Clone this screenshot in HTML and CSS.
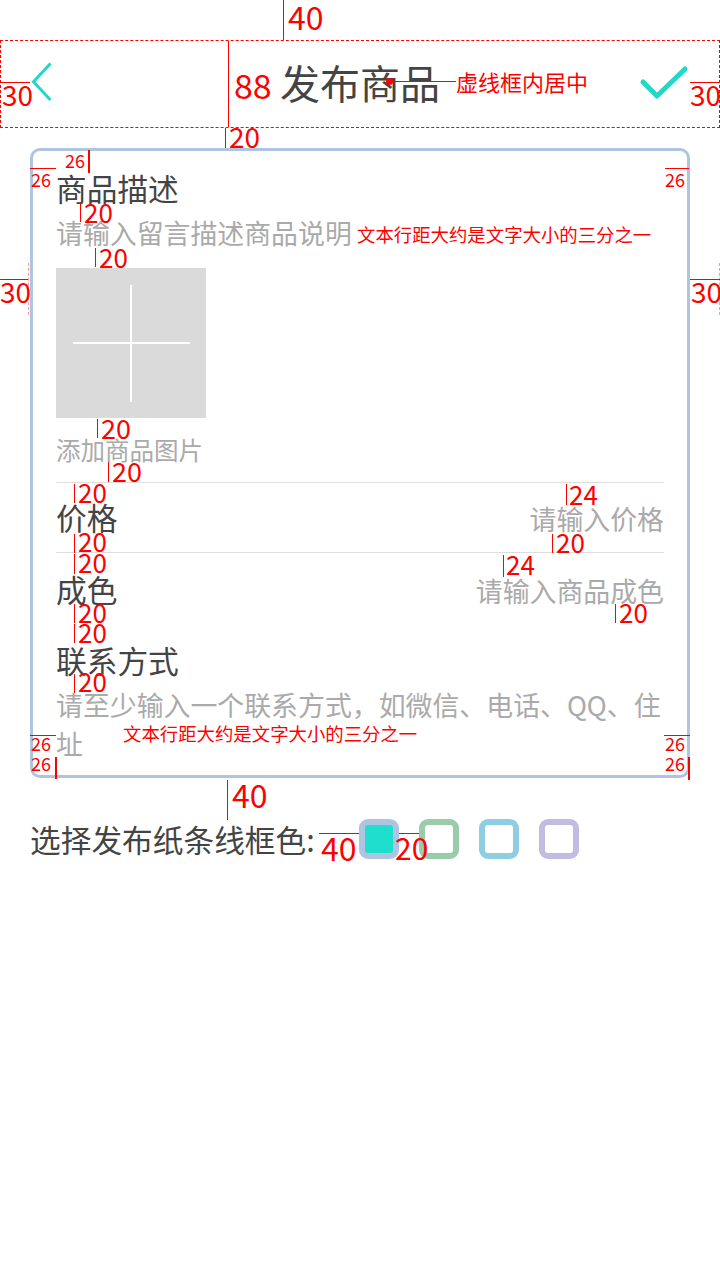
FILE: index.html
```html
<!DOCTYPE html>
<html>
<head>
    <title>发布商品</title>
    <link rel="stylesheet" href="styles.css">
</head>
<body>
    <div class="page">
        <!-- 顶部栏 -->
        <header class="topbar">
            <svg class="back" width="22" height="40" viewBox="0 0 22 40">
                <path d="M20.5 1.5 L3.5 19.7 L20.5 38" fill="none" stroke="#1fd8c8" stroke-width="3"/>
            </svg>
            <div class="title">发布商品</div>
            <svg class="ok" width="52" height="40" viewBox="0 0 52 40">
                <path d="M5 20 L19 34 L47 7" fill="none" stroke="#1fd8c8" stroke-width="5" stroke-linecap="round" stroke-linejoin="round"/>
            </svg>
        </header>

        <!-- 纸条 -->
        <div class="card">
            <div class="label">商品描述</div>
            <div class="hint desc">请输入留言描述商品说明</div>
            <div class="upload"></div>
            <div class="hint upload-text">添加商品图片</div>
            <div class="row first">
                <span class="label">价格</span>
                <span class="hint">请输入价格</span>
            </div>
            <div class="row">
                <span class="label">成色</span>
                <span class="hint">请输入商品成色</span>
            </div>
            <div class="label contact-title">联系方式</div>
            <div class="hint contact">请至少输入一个联系方式，如微信、电话、QQ、住址</div>
        </div>

        <!-- 选择线框色 -->
        <div class="colors">
            <span class="colors-label">选择发布纸条线框色:</span>
            <span class="swatch blue active"></span>
            <span class="swatch green"></span>
            <span class="swatch cyan"></span>
            <span class="swatch purple"></span>
        </div>
    </div>

    <!-- 标注层 -->
    <div class="marks" id="marks">
        <div class="mk-dot"></div>
        <div class="mk-dash left"></div>
        <div class="mk-dash right"></div>
    </div>

    <script>
        // 标注线: x, y, 宽, 高
        var lines = [
            [283, 0, 1, 40], [228, 41, 1, 86], [0, 82, 30, 1], [690, 82, 29, 1],
            [389, 81, 67, 1], [225, 128, 1, 20],
            [88, 150, 2, 23], [30, 168, 26, 1], [665, 168, 24, 1],
            [80, 204, 1, 18], [95, 248, 1, 19], [0, 279, 28, 1], [690, 279, 30, 1],
            [97, 419, 1, 19], [108, 462, 1, 20],
            [74, 484, 1, 19], [74, 534, 1, 19], [74, 554, 1, 20], [74, 604, 1, 19],
            [74, 624, 1, 19], [74, 674, 1, 19],
            [566, 484, 1, 21], [552, 534, 1, 19], [503, 555, 1, 22], [615, 604, 1, 19],
            [30, 735, 26, 1], [55, 757, 2, 22], [664, 735, 26, 1], [688, 757, 2, 23],
            [227, 780, 1, 40], [319, 833, 40, 1], [399, 833, 20, 1]
        ];

        // 标注文字: x, y, 字号, 内容
        var labels = [
            [288, 0, 32, '40'], [234, 68, 34, '88'], [2, 80, 28, '30'], [690, 80, 28, '30'],
            [456, 70, 22, '虚线框内居中'], [229, 122, 28, '20'],
            [65, 151, 18, '26'], [31, 170, 18, '26'], [665, 170, 18, '26'],
            [84, 199, 26, '20'], [357, 225, 18.4, '文本行距大约是文字大小的三分之一'],
            [99, 244, 26, '20'], [0, 277, 28, '30'], [691, 277, 28, '30'],
            [101, 414, 27, '20'], [112, 457, 27, '20'],
            [78, 479, 26, '20'], [78, 528, 26, '20'], [78, 549, 26, '20'],
            [78, 599, 26, '20'], [78, 619, 26, '20'], [78, 668, 26, '20'],
            [569, 481, 26, '24'], [556, 529, 26, '20'], [506, 551, 26, '24'], [619, 599, 26, '20'],
            [123, 724, 18.4, '文本行距大约是文字大小的三分之一'],
            [31, 734, 18, '26'], [31, 754, 18, '26'], [665, 734, 18, '26'], [665, 754, 18, '26'],
            [232, 778, 32, '40'], [321, 831, 32, '40'], [395, 832, 30, '20']
        ];

        var marks = document.getElementById('marks');

        lines.forEach(function(l) {
            var d = document.createElement('div');
            d.className = 'mk-line';
            d.style.left = l[0] + 'px';
            d.style.top = l[1] + 'px';
            d.style.width = l[2] + 'px';
            d.style.height = l[3] + 'px';
            marks.appendChild(d);
        });

        labels.forEach(function(t) {
            var d = document.createElement('div');
            d.className = 'mk-text';
            d.style.left = t[0] + 'px';
            d.style.top = t[1] + 'px';
            d.style.fontSize = t[2] + 'px';
            d.textContent = t[3];
            marks.appendChild(d);
        });
    </script>
</body>
</html>
```

FILE: styles.css
```css
body { margin: 0; font-family: "Noto Sans CJK SC", sans-serif; background: #fff; color: #444; }
.page { padding-top: 40px; width: 720px; }

/* 顶部栏 */
.topbar {
    box-sizing: border-box;
    height: 88px;
    border: 1px dashed #ff0000;
    padding: 0 29px;
    display: grid;
    grid-template-columns: 1fr auto 1fr;
    align-items: center;
}
.back { justify-self: start; margin-bottom: 5px; }
.ok { justify-self: end; margin-bottom: 4px; }
.title { font-size: 40px; line-height: 40px; color: #444; margin-bottom: 4px; }

/* 纸条 */
.card {
    margin: 20px 30px 0;
    border: 3px solid #aec4e1;
    border-radius: 10px;
    padding: 21px 23px 12px;
}
.label { font-size: 30.7px; line-height: 31px; color: #444; }
.hint { font-size: 26.9px; line-height: 27px; color: #aaa; }
.desc { margin-top: 16px; }
.upload {
    margin-top: 22px;
    width: 150px;
    height: 150px;
    background: #dadada;
    position: relative;
}
.upload::before, .upload::after { content: ""; position: absolute; background: #fff; }
.upload::before { left: 17px; top: 74px; width: 117px; height: 2px; }
.upload::after { left: 74px; top: 17px; width: 2px; height: 117px; }
.upload-text { margin-top: 20px; font-size: 24.5px; line-height: 24px; }

.row {
    display: flex;
    justify-content: space-between;
    align-items: baseline;
    border-top: 1px solid #ddd;
    padding: 20px 0 20px;
}
.row.first { margin-top: 20px; padding-top: 18px; padding-bottom: 20px; }
.contact-title { margin-top: 20px; }
.contact { margin-top: 10px; line-height: 39px; }

/* 线框色 */
.colors {
    margin-top: 41px;
    padding-left: 30px;
    display: flex;
    align-items: center;
    gap: 20px;
}
.colors-label { font-size: 30.7px; line-height: 40px; color: #444; margin-right: 24px; }
.swatch {
    box-sizing: border-box;
    width: 40px;
    height: 40px;
    border: 6px solid;
    border-radius: 9px;
    background: #fff;
}
.swatch.blue { border-color: #aec4e1; }
.swatch.green { border-color: #9acbab; }
.swatch.cyan { border-color: #8fcde0; }
.swatch.purple { border-color: #c2bce2; }
.swatch.active { background: #1edecc; }

/* 标注 */
.marks { position: absolute; left: 0; top: 0; width: 720px; height: 1280px; pointer-events: none; }
.mk-line { position: absolute; background: #ff0000; }
.mk-text {
    position: absolute;
    color: #ff0000;
    line-height: 1;
    white-space: nowrap;
    font-family: "Noto Sans CJK SC", sans-serif;
}
.mk-dot {
    position: absolute;
    left: 386px;
    top: 78px;
    width: 7px;
    height: 7px;
    border-radius: 50%;
    background: #ff0000;
}
.mk-dash { position: absolute; top: 263px; height: 52px; border-left: 1px dashed #ff9a9a; }
.mk-dash.left { left: 28px; }
.mk-dash.right { left: 719px; }
```
